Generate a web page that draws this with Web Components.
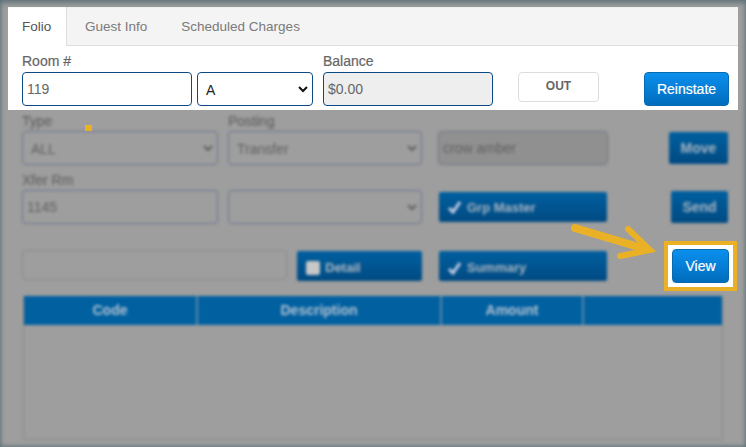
<!DOCTYPE html>
<html>
<head>
<meta charset="utf-8">
<title>Folio</title>
<style>
    html, body { margin: 0; padding: 0; }
    body { width: 746px; height: 447px; overflow: hidden; font-family: "Liberation Sans", Arial, sans-serif; }
</style>
</head>
<body>

<folio-screen>
    <folio-tabs slot="top"></folio-tabs>
    <room-form slot="top"></room-form>
    <dim-form slot="dim"></dim-form>
</folio-screen>

<script>
class FolioScreen extends HTMLElement {
    constructor() {
        super()
        this.attachShadow({ mode: 'open' })
        this.shadowRoot.innerHTML = `
            <style>
                :host {
                    display: block;
                    position: relative;
                    width: 746px;
                    height: 447px;
                    background: #9e9e9e;
                    overflow: hidden;
                }
                .top {
                    position: relative;
                    z-index: 1;
                    margin: 7px 8px 0;
                    height: 103px;
                    background: #fff;
                }
                .frame {
                    position: absolute;
                    inset: 0;
                    z-index: 2;
                    pointer-events: none;
                    box-shadow: inset 0 0 4px 1px #5f7278, inset 0 6px 4px -2px #7b878b;
                }
                .callout {
                    position: absolute;
                    left: 664px;
                    top: 241px;
                    z-index: 3;
                    box-sizing: border-box;
                    width: 73px;
                    height: 50px;
                    border: 4px solid #eab126;
                    background: #fff;
                    display: flex;
                    align-items: center;
                    justify-content: flex-end;
                    padding-right: 4px;
                }
                .arrow { position: absolute; left: 0; top: 0; z-index: 3; }
                .mark {
                    position: absolute;
                    left: 85px;
                    top: 125px;
                    z-index: 3;
                    width: 7px;
                    height: 6px;
                    background: #eab126;
                }
            </style>
            <div class="top"><slot name="top"></slot></div>
            <slot name="dim"></slot>
            <div class="frame"></div>
            <div class="mark"></div>
            <svg class="arrow" width="746" height="447" fill="none" stroke="#eab126">
                <line x1="575" y1="228" x2="642" y2="248" stroke-width="8" stroke-linecap="round"/>
                <polyline points="628,229 650,250 620,256" stroke-width="6" stroke-linecap="round" stroke-linejoin="miter"/>
            </svg>
            <div class="callout">
                <app-button style="width:57px;height:34px">View</app-button>
            </div>
        `
    }
}

class FolioTabs extends HTMLElement {
    constructor() {
        super()
        this.attachShadow({ mode: 'open' })
        this.shadowRoot.innerHTML = `
            <style>
                :host {
                    display: flex;
                    height: 39px;
                    box-sizing: border-box;
                    background: #f4f4f4;
                    border-bottom: 1px solid #dedede;
                    font-size: 13.5px;
                    color: #7a7a7a;
                }
                span { display: flex; align-items: center; padding: 1px 14px 0; height: 38px; box-sizing: border-box; }
                .active {
                    width: 59px;
                    height: 39px;
                    background: #fff;
                    color: #555;
                    border-right: 1px solid #dedede;
                    margin-right: 4px;
                    padding-bottom: 1px;
                }
                .next { margin-left: 0; padding: 1px 20px 0 14px; }
            </style>
            <span class="active">Folio</span>
            <span class="next">Guest Info</span>
            <span>Scheduled Charges</span>
        `
    }
}

class FormField extends HTMLElement {
    constructor() {
        super()
        this.attachShadow({ mode: 'open' })
        this.shadowRoot.innerHTML = `
            <style>
                :host {
                    display: flex;
                    flex-direction: column;
                    font-size: 14px;
                    color: var(--label-color, #666);
                }
                label {
                    height: 20px;
                    line-height: var(--label-line, 18px);
                    display: block;
                    -webkit-text-stroke: 0.2px currentColor;
                }
            </style>
            <label><slot name="label"></slot></label>
            <slot></slot>
        `
    }
}

class TextBox extends HTMLElement {
    constructor() {
        super()
        this.attachShadow({ mode: 'open' })
        this.shadowRoot.innerHTML = `
            <style>
                :host { display: block; height: var(--ctl-height, 34px); }
                input {
                    box-sizing: border-box;
                    width: 100%;
                    height: 100%;
                    margin: 0;
                    padding: 0 4px;
                    border: 1px solid var(--ctl-border, #0b4a86);
                    border-radius: 4px;
                    background: var(--ctl-bg, #fff);
                    font: 14px "Liberation Sans", Arial, sans-serif;
                    color: var(--ctl-color, #666);
                    outline: none;
                }
                :host([readonly]) input { background: var(--ctl-ro-bg, #eee); border-color: var(--ctl-ro-border, #0b4a86); }
            </style>
            <input type="text">
        `
        this.shadowRoot.querySelector('input').value = this.getAttribute('value') || ''
    }
}

class DropDown extends HTMLElement {
    constructor() {
        super()
        this.attachShadow({ mode: 'open' })
        this.shadowRoot.innerHTML = `
            <style>
                :host { display: block; position: relative; height: var(--ctl-height, 34px); }
                select {
                    appearance: none;
                    -webkit-appearance: none;
                    box-sizing: border-box;
                    width: 100%;
                    height: 100%;
                    margin: 0;
                    padding: 2px 8px 0;
                    border: 1px solid var(--ctl-border, #0b4a86);
                    border-radius: 4px;
                    background: var(--ctl-bg, #fff);
                    font: 14px "Liberation Sans", Arial, sans-serif;
                    color: var(--select-color, #222);
                    outline: none;
                }
                svg { position: absolute; right: 5px; top: 50%; margin-top: -3px; }
            </style>
            <select></select>
            <svg width="10" height="7" viewBox="0 0 10 7" fill="none" stroke="var(--arrow-color, #111)" stroke-width="2">
                <polyline points="1,1 5,5 9,1"/>
            </svg>
        `
        const opt = document.createElement('option')
        opt.textContent = this.getAttribute('value') || ''
        this.shadowRoot.querySelector('select').appendChild(opt)
    }
}

class AppButton extends HTMLElement {
    constructor() {
        super()
        this.attachShadow({ mode: 'open' })
        let icon = ''
        if (this.getAttribute('icon') === 'box') {
            icon = '<span class="box"></span>'
        }
        if (this.getAttribute('icon') === 'check') {
            icon = '<svg width="15" height="14" viewBox="0 0 15 14" fill="none" stroke="#c9cfe6" stroke-width="3"><polyline points="2,8 6,12 13,2"/></svg>'
        }
        this.shadowRoot.innerHTML = `
            <style>
                :host {
                    display: flex;
                    align-items: center;
                    justify-content: center;
                    box-sizing: border-box;
                    border: 1px solid #0a6ab0;
                    border-radius: 4px;
                    background: linear-gradient(#0b90ee, #006cbc);
                    color: #fff;
                    font-size: 14px;
                    padding-bottom: 1px;
                    -webkit-text-stroke: 0.2px currentColor;
                }
                :host([dim]) {
                    border: 0;
                    border-radius: 2px;
                    background: linear-gradient(#005f9f, #004a82);
                    color: #a9b5c2;
                    font-size: var(--btn-font, 13px);
                    font-weight: bold;
                    justify-content: var(--btn-justify, center);
                    padding: var(--btn-padding, 0);
                    gap: 5px;
                    -webkit-text-stroke: 0;
                }
                :host([plain]) {
                    border: 1px solid #ddd;
                    background: #fff;
                    color: #666;
                    font-size: 12px;
                    font-weight: bold;
                    padding-bottom: 3px;
                    -webkit-text-stroke: 0;
                }
                .box { width: 14px; height: 14px; background: #c8c8c8; border-radius: 2px; }
            </style>
            ${icon}
            <slot></slot>
        `
    }
}

class RoomForm extends HTMLElement {
    constructor() {
        super()
        this.attachShadow({ mode: 'open' })
        this.shadowRoot.innerHTML = `
            <style>
                :host {
                    display: flex;
                    align-items: flex-end;
                    padding: 6px 9px 4px 14px;
                }
                .room { width: 170px; margin-right: 5px; }
                .sub { width: 116px; margin-right: 10px; }
                .balance { width: 170px; margin-right: 25px; }
                .out { width: 81px; height: 30px; margin-right: 45px; margin-bottom: 4px; }
                .go { width: 85px; height: 34px; }
            </style>
            <form-field class="room"><span slot="label">Room #</span><text-box value="119"></text-box></form-field>
            <form-field class="sub"><drop-down value="A"></drop-down></form-field>
            <form-field class="balance"><span slot="label">Balance</span><text-box value="$0.00" readonly></text-box></form-field>
            <app-button class="out" plain>OUT</app-button>
            <app-button class="go">Reinstate</app-button>
        `
    }
}

class DimForm extends HTMLElement {
    constructor() {
        super()
        this.attachShadow({ mode: 'open' })
        this.shadowRoot.innerHTML = `
            <style>
                :host {
                    display: block;
                    padding: 1px 18px 0 22px;
                    filter: blur(1.8px);
                    --label-color: #626262;
                    --label-line: 21px;
                    --ctl-border: #67728c;
                    --ctl-bg: #9e9e9e;
                    --ctl-ro-bg: #909090;
                    --ctl-ro-border: #6f7480;
                    --ctl-color: #5f5f5f;
                    --select-color: #5f5f5f;
                    --arrow-color: #5f5f5f;
                }
                .row { display: flex; align-items: flex-end; }
                .row + .row { margin-top: 5px; }
                .c1 { width: 196px; margin-right: 10px; }
                .c2 { width: 194px; margin-right: 16px; }
                .c3 { width: 170px; }
                .btn3 { width: 168px; margin-left: 1px; }
                .push { margin-left: auto; --btn-font: 14px; }
                .last { margin-top: 26px !important; align-items: flex-start; --ctl-height: 30px; }
                .faint { --ctl-border: #8a8a8a; width: 265px; margin-right: 10px; }
                table-view { margin-top: 15px; }
            </style>
            <div class="row">
                <form-field class="c1"><span slot="label">Type</span><drop-down value="ALL"></drop-down></form-field>
                <form-field class="c2"><span slot="label">Posting</span><drop-down value="Transfer"></drop-down></form-field>
                <text-box class="c3" value="crow amber" readonly></text-box>
                <app-button class="push" dim style="width:59px;height:32px;margin-bottom:1px">Move</app-button>
            </div>
            <div class="row">
                <form-field class="c1"><span slot="label">Xfer Rm</span><text-box value="1145"></text-box></form-field>
                <form-field class="c2"><drop-down></drop-down></form-field>
                <app-button class="btn3" dim icon="check" style="height:30px;margin-bottom:2px;--btn-justify:flex-start;--btn-padding:0 0 0 8px">Grp Master</app-button>
                <app-button class="push" dim style="width:57px;height:32px;margin-bottom:1px">Send</app-button>
            </div>
            <div class="row last">
                <text-box class="faint"></text-box>
                <app-button dim icon="box" style="width:125px;height:30px;margin:1px 16px 0 0;--btn-justify:flex-start;--btn-padding:3px 0 0 9px">Detail</app-button>
                <app-button class="btn3" dim icon="check" style="height:30px;margin-top:1px;--btn-justify:flex-start;--btn-padding:3px 0 0 8px">Summary</app-button>
            </div>
            <table-view></table-view>
        `
    }
}

class TableView extends HTMLElement {
    constructor() {
        super()
        this.attachShadow({ mode: 'open' })
        this.shadowRoot.innerHTML = `
            <style>
                :host {
                    display: block;
                    width: 700px;
                    height: 144px;
                    margin-left: 1px;
                    box-sizing: border-box;
                    border: 1px solid #8a8a8a;
                    border-top: 0;
                }
                .head {
                    display: grid;
                    grid-template-columns: 174px 244px 142px 1fr;
                    height: 29px;
                    background: #0060a0;
                    color: #b4c2d2;
                    font-size: 14px;
                    font-weight: bold;
                }
                .head div {
                    display: flex;
                    align-items: center;
                    justify-content: center;
                    padding-bottom: 2px;
                    border-right: 2px solid #5b86ab;
                }
                .head div:last-child { border-right: 0; }
            </style>
            <div class="head">
                <div>Code</div>
                <div>Description</div>
                <div>Amount</div>
                <div></div>
            </div>
        `
    }
}

customElements.define('form-field', FormField)
customElements.define('text-box', TextBox)
customElements.define('drop-down', DropDown)
customElements.define('app-button', AppButton)
customElements.define('table-view', TableView)
customElements.define('folio-tabs', FolioTabs)
customElements.define('room-form', RoomForm)
customElements.define('dim-form', DimForm)
customElements.define('folio-screen', FolioScreen)
</script>
</body>
</html>
